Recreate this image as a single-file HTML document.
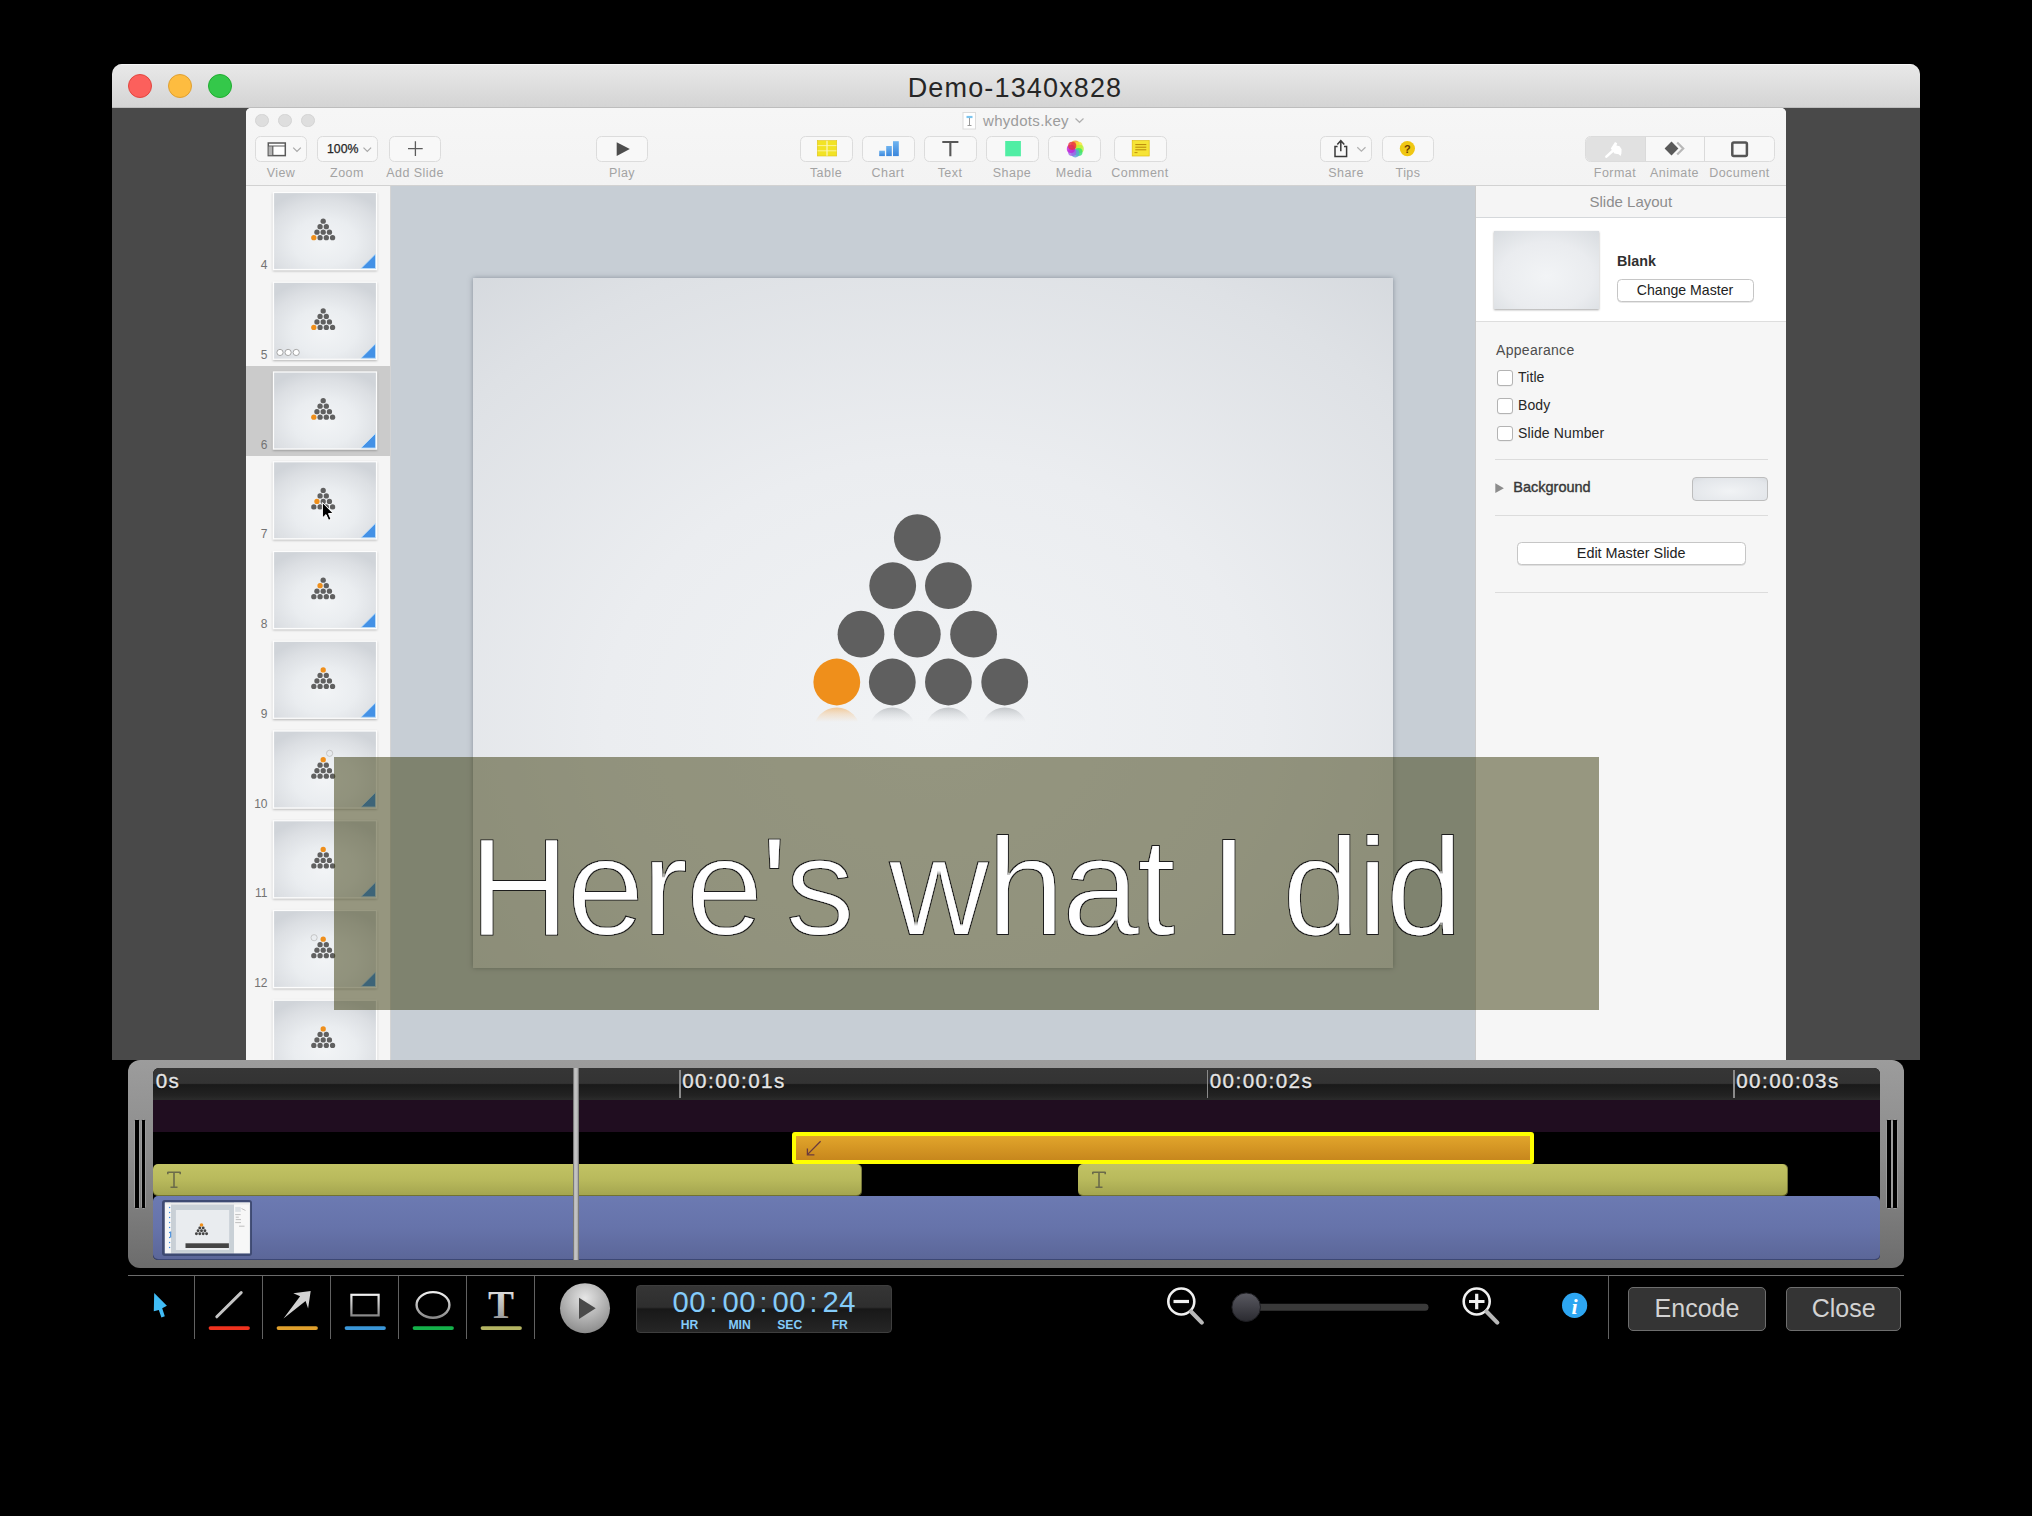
<!DOCTYPE html>
<html><head><meta charset="utf-8"><style>*{margin:0;padding:0;box-sizing:border-box}
html,body{width:2032px;height:1516px;overflow:hidden;background:#000;font-family:"Liberation Sans",sans-serif;position:relative}
div,svg{position:absolute}
.tl{width:24px;height:24px;border-radius:50%;top:74px}
.gl{width:13.6px;height:13.6px;border-radius:50%;background:#dedede;border:1px solid #d4d4d4;top:113.7px}
.btn{height:26px;top:136.4px;border:1px solid #dcdcdc;border-radius:5.5px;background:#f8f8f8}
.lbl{top:165.2px;height:16px;line-height:16px;font-size:12.5px;letter-spacing:0.45px;color:#a3a3a3;text-align:center;width:100px;white-space:nowrap}
.cb{left:1497px;width:15.6px;height:15.6px;border:1px solid #b3b3b3;border-radius:3px;background:#fff;box-shadow:0 0.5px 0.5px rgba(0,0,0,0.08)}
.sep{left:1494.5px;width:273.5px;height:1px;background:#dcdcdc}
.pbtn{background:#fff;border:1px solid #c6c6c6;border-radius:4.5px;box-shadow:0 0.8px 0.6px rgba(0,0,0,0.12)}
</style></head><body>
<div style="left:112px;top:64px;width:1808px;height:996px;background:#494949;border-radius:10px 10px 0 0;overflow:hidden"><div style="left:0;top:0;width:1808px;height:44px;background:linear-gradient(#e9e9e9,#d4d4d4);border-bottom:1px solid #bdbdbd;box-shadow:inset 0 1px 0 rgba(255,255,255,0.55)"></div></div><div class="tl" style="left:128px;background:#fc605c;border:1px solid #e2463f"></div><div class="tl" style="left:168px;background:#fdbc40;border:1px solid #dfa032"></div><div class="tl" style="left:208px;background:#34c84a;border:1px solid #20ad30"></div><div id="ttl" style="left:813px;top:72px;width:404px;height:32px;line-height:32px;text-align:center;font-size:27px;letter-spacing:1.15px;color:#262626">Demo-1340x828</div><div style="left:246px;top:108px;width:1540px;height:952px;background:#f5f5f5;border-radius:5px 5px 0 0;overflow:hidden"><div style="left:0;top:0;width:1540px;height:78px;background:linear-gradient(#f6f6f6,#f3f3f3);border-bottom:1px solid #d2d2d2"></div></div><div class="gl" style="left:255px"></div><div class="gl" style="left:278px"></div><div class="gl" style="left:301px"></div><div class="btn" style="left:255px;width:52px"></div><div class="btn" style="left:317px;width:61px"></div><div class="btn" style="left:389px;width:52px"></div><div class="btn" style="left:596px;width:52px"></div><div class="btn" style="left:800px;width:53px"></div><div class="btn" style="left:862px;width:53px"></div><div class="btn" style="left:924px;width:53px"></div><div class="btn" style="left:986px;width:53px"></div><div class="btn" style="left:1048px;width:53px"></div><div class="btn" style="left:1114px;width:53px"></div><div class="btn" style="left:1320px;width:52px"></div><div class="btn" style="left:1382px;width:52px"></div><div class="btn" style="left:1585px;width:190px;overflow:hidden"><div style="left:0;top:0;width:59px;height:24px;background:#e1e1e1"></div><div style="left:59px;top:0;width:1px;height:24px;background:#dadada"></div><div style="left:118px;top:0;width:1px;height:24px;background:#dadada"></div></div><div class="lbl" style="left:231px">View</div><div class="lbl" style="left:297px">Zoom</div><div class="lbl" style="left:365px">Add Slide</div><div class="lbl" style="left:572px">Play</div><div class="lbl" style="left:776px">Table</div><div class="lbl" style="left:838px">Chart</div><div class="lbl" style="left:900px">Text</div><div class="lbl" style="left:962px">Shape</div><div class="lbl" style="left:1024px">Media</div><div class="lbl" style="left:1090px">Comment</div><div class="lbl" style="left:1296px">Share</div><div class="lbl" style="left:1358px">Tips</div><div class="lbl" style="left:1565px">Format</div><div class="lbl" style="left:1624.5px">Animate</div><div class="lbl" style="left:1689.5px">Document</div><div style="left:983px;top:112px;height:18px;line-height:18px;font-size:15px;letter-spacing:0.3px;color:#9c9c9c;white-space:nowrap">whydots.key</div><div style="left:327px;top:141px;height:16px;line-height:16px;font-size:12.3px;color:#262626;white-space:nowrap;-webkit-text-stroke:0.25px #262626">100%</div><svg style="left:0;top:0" width="2032" height="200"><rect x="963" y="112.5" width="12.5" height="16.5" fill="#fff" stroke="#dcdcdc" stroke-width="1"/><path d="M966.5,117 h6" stroke="#7cc4ee" stroke-width="2.2"/><path d="M969.5,118 v7 M967.5,125.5 h4" stroke="#9a9a9a" stroke-width="1"/><path d="M1075.5,118.5 l4,3.8 l4,-3.8" fill="none" stroke="#b0b0b0" stroke-width="1.2"/><rect x="268.3" y="143" width="17" height="12.6" fill="#fff" stroke="#5a5a5a" stroke-width="1.5"/><rect x="268.6" y="146.2" width="4" height="9" fill="#b4b4b4"/><path d="M268.3,146 h17 M272.8,146 v9.6" stroke="#5a5a5a" stroke-width="1.2"/><path d="M293.2,147.6 l3.8,3.8 l3.8,-3.8" fill="none" stroke="#a8a8a8" stroke-width="1.2"/><path d="M363.5,147.6 l3.8,3.8 l3.8,-3.8" fill="none" stroke="#a8a8a8" stroke-width="1.2"/><path d="M415.4,141.3 v14.8 M408,148.7 h14.7" stroke="#5c5c5c" stroke-width="1.3"/><path d="M616.7,142.3 L629.8,149.1 L616.7,155.9 Z" fill="#4d4d4d"/><rect x="817.3" y="140.6" width="19.4" height="15.4" fill="#f2e324" stroke="#e0c41c" stroke-width="0.6"/><path d="M817.5,145.6 h19 M817.5,150.8 h19" stroke="#fbf39a" stroke-width="1"/><path d="M827,140.8 v15" stroke="#fbf6c0" stroke-width="1.2"/><defs><linearGradient id="bl" x1="0" y1="0" x2="0" y2="1"><stop offset="0" stop-color="#6fb4f0"/><stop offset="1" stop-color="#3a86dc"/></linearGradient></defs><rect x="879.2" y="150.7" width="5.7" height="5.4" fill="url(#bl)"/><rect x="886.2" y="146" width="5.6" height="10.1" fill="url(#bl)"/><rect x="893" y="141.2" width="5.8" height="14.9" fill="url(#bl)"/><path d="M942.3,142 h16.1 M950.35,142 v14.3" stroke="#585858" stroke-width="2.1"/><rect x="1005.2" y="141" width="15.7" height="15.3" fill="#50eea4"/><circle cx="1075.30" cy="144.50" r="4.1" fill="#f39a1e" fill-opacity="0.8"/><circle cx="1078.41" cy="145.79" r="4.1" fill="#f5e430" fill-opacity="0.8"/><circle cx="1079.70" cy="148.90" r="4.1" fill="#b5f238" fill-opacity="0.8"/><circle cx="1078.41" cy="152.01" r="4.1" fill="#30e070" fill-opacity="0.8"/><circle cx="1075.30" cy="153.30" r="4.1" fill="#5aa0d8" fill-opacity="0.8"/><circle cx="1072.19" cy="152.01" r="4.1" fill="#a060e8" fill-opacity="0.8"/><circle cx="1070.90" cy="148.90" r="4.1" fill="#c020d8" fill-opacity="0.8"/><circle cx="1072.19" cy="145.79" r="4.1" fill="#e8303c" fill-opacity="0.8"/><rect x="1132.2" y="140.6" width="17" height="15.4" fill="#f6e436" stroke="#e0be10" stroke-width="0.7"/><path d="M1135.3,144.6 h11 M1135.3,147.2 h11 M1135.3,149.8 h11" stroke="#b8860b" stroke-width="1"/><path d="M1134.5,152.6 h3" stroke="#b8860b" stroke-width="0.9"/><path d="M1337.6,146.6 H1335 V156.6 H1346.6 V146.6 H1344" fill="none" stroke="#3a3a3a" stroke-width="1.5"/><path d="M1340.8,151.3 V141 M1337.3,144.4 L1340.8,140.7 L1344.3,144.4" fill="none" stroke="#3a3a3a" stroke-width="1.5"/><path d="M1357.3,147.2 l4.1,3.9 l4.1,-3.9" fill="none" stroke="#b0b0b0" stroke-width="1.2"/><circle cx="1407.4" cy="148.6" r="7.6" fill="#f0c713"/><text x="1407.4" y="152.6" font-size="11" font-weight="bold" text-anchor="middle" fill="#6b3d00" font-family="Liberation Sans">?</text><path d="M1610.8,148.6 L1615,142 L1617.2,143.2 L1616.4,145.6 L1619.6,146.2 L1621.6,149.2 L1621.4,153.6 L1620.6,156 L1618.6,154.2 L1614.4,153.4 Z" fill="#fff"/><path d="M1612.6,151 L1606.4,156.6" stroke="#fff" stroke-width="2.6" stroke-linecap="round"/><path d="M1664.6,148.5 L1671.5,141.5 L1678.4,148.5 L1671.5,155.6 Z" fill="#595959"/><path d="M1677.2,142.5 L1683.2,148.5 L1677.2,154.5" fill="none" stroke="#b8b8b8" stroke-width="2.2"/><rect x="1732.3" y="142.6" width="14.6" height="13.4" rx="1.5" fill="none" stroke="#555" stroke-width="2.5"/></svg>
<div style="left:246px;top:186px;width:145px;height:874px;background:#f5f5f5;border-right:1px solid #d4d4d4"></div><div style="left:246px;top:366px;width:144px;height:90px;background:#cbcbcb"></div><div style="top:258.04px;height:14.4px;line-height:14.4px;font-size:12px;color:#737373;white-space:nowrap;left:227.50px;width:40px;text-align:right;">4</div><div style="top:347.79px;height:14.4px;line-height:14.4px;font-size:12px;color:#737373;white-space:nowrap;left:227.50px;width:40px;text-align:right;">5</div><div style="top:437.54px;height:14.4px;line-height:14.4px;font-size:12px;color:#737373;white-space:nowrap;left:227.50px;width:40px;text-align:right;">6</div><div style="top:527.29px;height:14.4px;line-height:14.4px;font-size:12px;color:#737373;white-space:nowrap;left:227.50px;width:40px;text-align:right;">7</div><div style="top:617.04px;height:14.4px;line-height:14.4px;font-size:12px;color:#737373;white-space:nowrap;left:227.50px;width:40px;text-align:right;">8</div><div style="top:706.79px;height:14.4px;line-height:14.4px;font-size:12px;color:#737373;white-space:nowrap;left:227.50px;width:40px;text-align:right;">9</div><div style="top:796.54px;height:14.4px;line-height:14.4px;font-size:12px;color:#737373;white-space:nowrap;left:227.50px;width:40px;text-align:right;">10</div><div style="top:886.29px;height:14.4px;line-height:14.4px;font-size:12px;color:#737373;white-space:nowrap;left:227.50px;width:40px;text-align:right;">11</div><div style="top:976.04px;height:14.4px;line-height:14.4px;font-size:12px;color:#737373;white-space:nowrap;left:227.50px;width:40px;text-align:right;">12</div><svg style="left:0;top:0" width="400" height="1060"><defs><radialGradient id="tg" cx="50%" cy="64%" r="68%"><stop offset="0" stop-color="#f2f4f6"/><stop offset="0.45" stop-color="#eaedf0"/><stop offset="0.8" stop-color="#dcdfe3"/><stop offset="1" stop-color="#d0d4d9"/></radialGradient><filter id="sh" x="-10%" y="-10%" width="120%" height="130%"><feDropShadow dx="0" dy="1" stdDeviation="1.2" flood-color="#000" flood-opacity="0.28"/></filter></defs><rect x="273.5" y="192.5" width="103" height="77" fill="url(#tg)" stroke="#fdfdfd" stroke-width="1.2" filter="url(#sh)"/><circle cx="323.20" cy="221.20" r="2.65" fill="#606060"/><circle cx="320.07" cy="226.70" r="2.65" fill="#606060"/><circle cx="326.32" cy="226.70" r="2.65" fill="#606060"/><circle cx="316.95" cy="232.20" r="2.65" fill="#606060"/><circle cx="323.20" cy="232.20" r="2.65" fill="#606060"/><circle cx="329.45" cy="232.20" r="2.65" fill="#606060"/><circle cx="313.82" cy="237.70" r="2.65" fill="#ef8f1b"/><circle cx="320.07" cy="237.70" r="2.65" fill="#606060"/><circle cx="326.32" cy="237.70" r="2.65" fill="#606060"/><circle cx="332.57" cy="237.70" r="2.65" fill="#606060"/><path d="M375.5,254.0 L375.5,268.5 L361,268.5 Z" fill="#4391e6" stroke="#bfe0fa" stroke-width="0.8"/><rect x="273.5" y="282.25" width="103" height="77" fill="url(#tg)" stroke="#fdfdfd" stroke-width="1.2" filter="url(#sh)"/><circle cx="323.20" cy="310.95" r="2.65" fill="#606060"/><circle cx="320.07" cy="316.45" r="2.65" fill="#606060"/><circle cx="326.32" cy="316.45" r="2.65" fill="#606060"/><circle cx="316.95" cy="321.95" r="2.65" fill="#606060"/><circle cx="323.20" cy="321.95" r="2.65" fill="#606060"/><circle cx="329.45" cy="321.95" r="2.65" fill="#606060"/><circle cx="313.82" cy="327.45" r="2.65" fill="#ef8f1b"/><circle cx="320.07" cy="327.45" r="2.65" fill="#606060"/><circle cx="326.32" cy="327.45" r="2.65" fill="#606060"/><circle cx="332.57" cy="327.45" r="2.65" fill="#606060"/><path d="M375.5,343.75 L375.5,358.25 L361,358.25 Z" fill="#4391e6" stroke="#bfe0fa" stroke-width="0.8"/><circle cx="280.0" cy="352.45" r="3.1" fill="#fff" stroke="#9c9c9c" stroke-width="0.9"/><circle cx="288.1" cy="352.45" r="3.1" fill="#fff" stroke="#9c9c9c" stroke-width="0.9"/><circle cx="296.2" cy="352.45" r="3.1" fill="#fff" stroke="#9c9c9c" stroke-width="0.9"/><rect x="273.5" y="372.0" width="103" height="77" fill="url(#tg)" stroke="#fdfdfd" stroke-width="1.2" filter="url(#sh)"/><circle cx="323.20" cy="400.70" r="2.65" fill="#606060"/><circle cx="320.07" cy="406.20" r="2.65" fill="#606060"/><circle cx="326.32" cy="406.20" r="2.65" fill="#606060"/><circle cx="316.95" cy="411.70" r="2.65" fill="#606060"/><circle cx="323.20" cy="411.70" r="2.65" fill="#606060"/><circle cx="329.45" cy="411.70" r="2.65" fill="#606060"/><circle cx="313.82" cy="417.20" r="2.65" fill="#ef8f1b"/><circle cx="320.07" cy="417.20" r="2.65" fill="#606060"/><circle cx="326.32" cy="417.20" r="2.65" fill="#606060"/><circle cx="332.57" cy="417.20" r="2.65" fill="#606060"/><path d="M375.5,433.5 L375.5,448.0 L361,448.0 Z" fill="#4391e6" stroke="#bfe0fa" stroke-width="0.8"/><rect x="273.5" y="461.75" width="103" height="77" fill="url(#tg)" stroke="#fdfdfd" stroke-width="1.2" filter="url(#sh)"/><circle cx="323.20" cy="490.45" r="2.65" fill="#606060"/><circle cx="320.07" cy="495.95" r="2.65" fill="#606060"/><circle cx="326.32" cy="495.95" r="2.65" fill="#606060"/><circle cx="316.95" cy="501.45" r="2.65" fill="#ef8f1b"/><circle cx="323.20" cy="501.45" r="2.65" fill="#606060"/><circle cx="329.45" cy="501.45" r="2.65" fill="#606060"/><circle cx="313.82" cy="506.95" r="2.65" fill="#606060"/><circle cx="320.07" cy="506.95" r="2.65" fill="#606060"/><circle cx="326.32" cy="506.95" r="2.65" fill="#606060"/><circle cx="332.57" cy="506.95" r="2.65" fill="#606060"/><path d="M375.5,523.25 L375.5,537.75 L361,537.75 Z" fill="#4391e6" stroke="#bfe0fa" stroke-width="0.8"/><rect x="273.5" y="551.5" width="103" height="77" fill="url(#tg)" stroke="#fdfdfd" stroke-width="1.2" filter="url(#sh)"/><circle cx="323.20" cy="580.20" r="2.65" fill="#606060"/><circle cx="320.07" cy="585.70" r="2.65" fill="#ef8f1b"/><circle cx="326.32" cy="585.70" r="2.65" fill="#606060"/><circle cx="316.95" cy="591.20" r="2.65" fill="#606060"/><circle cx="323.20" cy="591.20" r="2.65" fill="#606060"/><circle cx="329.45" cy="591.20" r="2.65" fill="#606060"/><circle cx="313.82" cy="596.70" r="2.65" fill="#606060"/><circle cx="320.07" cy="596.70" r="2.65" fill="#606060"/><circle cx="326.32" cy="596.70" r="2.65" fill="#606060"/><circle cx="332.57" cy="596.70" r="2.65" fill="#606060"/><path d="M375.5,613.0 L375.5,627.5 L361,627.5 Z" fill="#4391e6" stroke="#bfe0fa" stroke-width="0.8"/><rect x="273.5" y="641.25" width="103" height="77" fill="url(#tg)" stroke="#fdfdfd" stroke-width="1.2" filter="url(#sh)"/><circle cx="323.20" cy="669.95" r="2.65" fill="#ef8f1b"/><circle cx="320.07" cy="675.45" r="2.65" fill="#606060"/><circle cx="326.32" cy="675.45" r="2.65" fill="#606060"/><circle cx="316.95" cy="680.95" r="2.65" fill="#606060"/><circle cx="323.20" cy="680.95" r="2.65" fill="#606060"/><circle cx="329.45" cy="680.95" r="2.65" fill="#606060"/><circle cx="313.82" cy="686.45" r="2.65" fill="#606060"/><circle cx="320.07" cy="686.45" r="2.65" fill="#606060"/><circle cx="326.32" cy="686.45" r="2.65" fill="#606060"/><circle cx="332.57" cy="686.45" r="2.65" fill="#606060"/><path d="M375.5,702.75 L375.5,717.25 L361,717.25 Z" fill="#4391e6" stroke="#bfe0fa" stroke-width="0.8"/><rect x="273.5" y="731.0" width="103" height="77" fill="url(#tg)" stroke="#fdfdfd" stroke-width="1.2" filter="url(#sh)"/><circle cx="323.20" cy="759.70" r="2.65" fill="#ef8f1b"/><circle cx="320.07" cy="765.20" r="2.65" fill="#606060"/><circle cx="326.32" cy="765.20" r="2.65" fill="#606060"/><circle cx="316.95" cy="770.70" r="2.65" fill="#606060"/><circle cx="323.20" cy="770.70" r="2.65" fill="#606060"/><circle cx="329.45" cy="770.70" r="2.65" fill="#606060"/><circle cx="313.82" cy="776.20" r="2.65" fill="#606060"/><circle cx="320.07" cy="776.20" r="2.65" fill="#606060"/><circle cx="326.32" cy="776.20" r="2.65" fill="#606060"/><circle cx="332.57" cy="776.20" r="2.65" fill="#606060"/><path d="M375.5,792.5 L375.5,807.0 L361,807.0 Z" fill="#4391e6" stroke="#bfe0fa" stroke-width="0.8"/><circle cx="329.6" cy="753.3" r="3.1" fill="none" stroke="#bcbcbc" stroke-width="0.8"/><rect x="273.5" y="820.75" width="103" height="77" fill="url(#tg)" stroke="#fdfdfd" stroke-width="1.2" filter="url(#sh)"/><circle cx="323.20" cy="849.45" r="2.65" fill="#ef8f1b"/><circle cx="320.07" cy="854.95" r="2.65" fill="#606060"/><circle cx="326.32" cy="854.95" r="2.65" fill="#606060"/><circle cx="316.95" cy="860.45" r="2.65" fill="#606060"/><circle cx="323.20" cy="860.45" r="2.65" fill="#606060"/><circle cx="329.45" cy="860.45" r="2.65" fill="#606060"/><circle cx="313.82" cy="865.95" r="2.65" fill="#606060"/><circle cx="320.07" cy="865.95" r="2.65" fill="#606060"/><circle cx="326.32" cy="865.95" r="2.65" fill="#606060"/><circle cx="332.57" cy="865.95" r="2.65" fill="#606060"/><path d="M375.5,882.25 L375.5,896.75 L361,896.75 Z" fill="#4391e6" stroke="#bfe0fa" stroke-width="0.8"/><rect x="273.5" y="910.5" width="103" height="77" fill="url(#tg)" stroke="#fdfdfd" stroke-width="1.2" filter="url(#sh)"/><circle cx="323.20" cy="939.20" r="2.65" fill="#ef8f1b"/><circle cx="320.07" cy="944.70" r="2.65" fill="#606060"/><circle cx="326.32" cy="944.70" r="2.65" fill="#606060"/><circle cx="316.95" cy="950.20" r="2.65" fill="#606060"/><circle cx="323.20" cy="950.20" r="2.65" fill="#606060"/><circle cx="329.45" cy="950.20" r="2.65" fill="#606060"/><circle cx="313.82" cy="955.70" r="2.65" fill="#606060"/><circle cx="320.07" cy="955.70" r="2.65" fill="#606060"/><circle cx="326.32" cy="955.70" r="2.65" fill="#606060"/><circle cx="332.57" cy="955.70" r="2.65" fill="#606060"/><path d="M375.5,972.0 L375.5,986.5 L361,986.5 Z" fill="#4391e6" stroke="#bfe0fa" stroke-width="0.8"/><circle cx="314.1" cy="937.7" r="3.1" fill="none" stroke="#bcbcbc" stroke-width="0.8"/><rect x="273.5" y="1000.25" width="103" height="77" fill="url(#tg)" stroke="#fdfdfd" stroke-width="1.2" filter="url(#sh)"/><circle cx="323.20" cy="1028.95" r="2.65" fill="#ef8f1b"/><circle cx="320.07" cy="1034.45" r="2.65" fill="#606060"/><circle cx="326.32" cy="1034.45" r="2.65" fill="#606060"/><circle cx="316.95" cy="1039.95" r="2.65" fill="#606060"/><circle cx="323.20" cy="1039.95" r="2.65" fill="#606060"/><circle cx="329.45" cy="1039.95" r="2.65" fill="#606060"/><circle cx="313.82" cy="1045.45" r="2.65" fill="#606060"/><circle cx="320.07" cy="1045.45" r="2.65" fill="#606060"/><circle cx="326.32" cy="1045.45" r="2.65" fill="#606060"/><circle cx="332.57" cy="1045.45" r="2.65" fill="#606060"/><path d="M322.4,502.5 L322.4,518 L326,514.6 L328.6,520.3 L331,519.2 L328.5,513.6 L333.2,513.4 Z" fill="#000" stroke="#fff" stroke-width="1"/></svg><div style="left:391px;top:186px;width:1084px;height:874px;background:#c7ced5"></div><div style="left:473px;top:278px;width:920px;height:690px;background:radial-gradient(ellipse 85% 90% at 50% 64%,#f1f3f5 0%,#ebedf0 42%,#dee1e5 78%,#d2d6db 100%);box-shadow:0 0 5px rgba(70,80,95,0.5)"></div><svg style="left:780px;top:490px" width="280" height="250" viewBox="780 490 280 250"><defs><linearGradient id="rf" gradientUnits="userSpaceOnUse" x1="0" y1="706" x2="0" y2="722"><stop offset="0" stop-color="#8e9398" stop-opacity="0.55"/><stop offset="0.5" stop-color="#b0b4b8" stop-opacity="0.3"/><stop offset="1" stop-color="#c8ccd0" stop-opacity="0"/></linearGradient><linearGradient id="rfo" gradientUnits="userSpaceOnUse" x1="0" y1="706" x2="0" y2="722"><stop offset="0" stop-color="#f0a040" stop-opacity="0.6"/><stop offset="0.5" stop-color="#f5b870" stop-opacity="0.3"/><stop offset="1" stop-color="#f5c080" stop-opacity="0"/></linearGradient></defs><circle cx="917.3" cy="537.7" r="23.4" fill="#5f5f5f"/><circle cx="892.7" cy="585.7" r="23.4" fill="#5f5f5f"/><circle cx="948.4" cy="585.7" r="23.4" fill="#5f5f5f"/><circle cx="861" cy="634.2" r="23.4" fill="#5f5f5f"/><circle cx="917.3" cy="634.2" r="23.4" fill="#5f5f5f"/><circle cx="973.6" cy="634.2" r="23.4" fill="#5f5f5f"/><circle cx="836.8" cy="682" r="23.4" fill="#ef8f1b"/><circle cx="892.3" cy="682" r="23.4" fill="#5f5f5f"/><circle cx="948.4" cy="682" r="23.4" fill="#5f5f5f"/><circle cx="1004.7" cy="682" r="23.4" fill="#5f5f5f"/><clipPath id="rc"><rect x="780" y="706.2" width="280" height="16"/></clipPath><circle cx="836.8" cy="730.6" r="23.2" fill="url(#rfo)" clip-path="url(#rc)"/><circle cx="892.3" cy="730.6" r="23.2" fill="url(#rf)" clip-path="url(#rc)"/><circle cx="948.4" cy="730.6" r="23.2" fill="url(#rf)" clip-path="url(#rc)"/><circle cx="1004.7" cy="730.6" r="23.2" fill="url(#rf)" clip-path="url(#rc)"/></svg><div style="left:1475px;top:186px;width:311px;height:874px;background:#f6f6f6;border-left:1px solid #cacaca"></div><div style="left:1476px;top:186px;width:310px;height:32px;background:#f5f5f5;border-bottom:1px solid #d5d8db"></div><div style="left:1476px;top:218px;width:310px;height:104px;background:#fff;border-bottom:1px solid #dedede"></div><div style="top:193.30px;height:18.0px;line-height:18.0px;font-size:15px;color:#8d8d8d;white-space:nowrap;left:1530.80px;width:200px;text-align:center;">Slide Layout</div><div style="left:1493.5px;top:231px;width:105px;height:78px;background:radial-gradient(ellipse 80% 80% at 50% 58%,#f2f4f6 0%,#eaecef 55%,#d6dade 100%);box-shadow:0 1px 2px rgba(0,0,0,0.35)"></div><div style="top:252.67px;height:17.16px;line-height:17.16px;font-size:14.3px;color:#303030;white-space:nowrap;font-weight:bold;left:1617.00px;">Blank</div><div class="pbtn" style="left:1616.5px;top:278.7px;width:137px;height:23px"></div><div style="top:281.95px;height:16.92px;line-height:16.92px;font-size:14.1px;color:#222;white-space:nowrap;left:1605.00px;width:160px;text-align:center;">Change Master</div><div style="top:342.15px;height:16.8px;line-height:16.8px;font-size:14px;color:#4d4d4d;white-space:nowrap;letter-spacing:0.3px;left:1496.00px;">Appearance</div><div class="cb" style="top:370.2px"></div><div style="top:369.35px;height:16.8px;line-height:16.8px;font-size:14px;color:#262626;white-space:nowrap;letter-spacing:0.12px;left:1518.00px;">Title</div><div class="cb" style="top:398.0px"></div><div style="top:397.15px;height:16.8px;line-height:16.8px;font-size:14px;color:#262626;white-space:nowrap;letter-spacing:0.12px;left:1518.00px;">Body</div><div class="cb" style="top:425.8px"></div><div style="top:424.95px;height:16.8px;line-height:16.8px;font-size:14px;color:#262626;white-space:nowrap;letter-spacing:0.12px;left:1518.00px;">Slide Number</div><div class="sep" style="top:459px"></div><svg style="left:1494px;top:482px" width="12" height="14"><path d="M1.3,1.2 L9.9,6.2 L1.3,11.1 Z" fill="#8c8c8c"/></svg><div style="top:479.38px;height:17.4px;line-height:17.4px;font-size:14.5px;color:#383838;white-space:nowrap;left:1513.30px;-webkit-text-stroke:0.4px #383838;">Background</div><div style="left:1692px;top:477.3px;width:75.7px;height:23.3px;border:1px solid #bdbdbd;border-radius:4px;background:radial-gradient(ellipse 80% 90% at 50% 60%,#f1f3f5 0%,#e3e6ea 70%,#d3d7dc 100%)"></div><div class="sep" style="top:515px"></div><div class="pbtn" style="left:1516.7px;top:541.8px;width:229px;height:23.4px"></div><div style="top:545.37px;height:17.28px;line-height:17.28px;font-size:14.4px;color:#222;white-space:nowrap;left:1511.20px;width:240px;text-align:center;">Edit Master Slide</div><div class="sep" style="top:592px"></div>
<div style="left:334px;top:757px;width:1264.5px;height:253px;background:rgba(56,56,10,0.5)"></div><svg style="left:0;top:700px" width="2032" height="330" viewBox="0 700 2032 330"><defs><filter id="thin" filterUnits="userSpaceOnUse" x="400" y="780" width="1150" height="200"><feMorphology in="SourceAlpha" operator="erode" radius="1" result="w"/><feFlood flood-color="#1e1e1e" result="dk"/><feComposite in="dk" in2="SourceAlpha" operator="in" result="ol"/><feFlood flood-color="#ffffff" result="wh"/><feComposite in="wh" in2="w" operator="in" result="wf"/><feMerge><feMergeNode in="ol"/><feMergeNode in="wf"/></feMerge></filter></defs><text id="big" x="469" y="934.6" font-family="Liberation Sans" font-size="139" fill="#fff" letter-spacing="-2.3" filter="url(#thin)">Here's what I did</text></svg>
<div style="left:128px;top:1060px;width:1776px;height:208px;border-radius:12px;background:linear-gradient(#9c9c9c 0%,#8c8c8c 45%,#6c6c6c 100%)"></div><div style="left:152.5px;top:1068px;width:1727.5px;height:192px;background:#000;border-radius:6px 6px 5px 5px"></div><div style="left:152.5px;top:1068px;width:1727.5px;height:32px;border-radius:6px 6px 0 0;background:linear-gradient(#363636 0%,#333 48%,#191919 52%,#222 85%,#2b2b2b 100%)"></div><div style="left:152.5px;top:1100px;width:1727.5px;height:32px;background:#200d20"></div><div style="left:155.7px;top:1068.5px;height:24px;line-height:24px;font-size:20.6px;letter-spacing:1.45px;color:#e4e4e4;white-space:nowrap;-webkit-text-stroke:0.35px #e4e4e4;text-shadow:0 1px 1px rgba(0,0,0,0.8)">0s</div><div style="left:679.25px;top:1070px;width:1.5px;height:28px;background:#8a8a8a"></div><div style="left:682.2px;top:1068.5px;height:24px;line-height:24px;font-size:20.6px;letter-spacing:1.45px;color:#e4e4e4;white-space:nowrap;-webkit-text-stroke:0.35px #e4e4e4;text-shadow:0 1px 1px rgba(0,0,0,0.8)">00:00:01s</div><div style="left:1206.75px;top:1070px;width:1.5px;height:28px;background:#8a8a8a"></div><div style="left:1209.7px;top:1068.5px;height:24px;line-height:24px;font-size:20.6px;letter-spacing:1.45px;color:#e4e4e4;white-space:nowrap;-webkit-text-stroke:0.35px #e4e4e4;text-shadow:0 1px 1px rgba(0,0,0,0.8)">00:00:02s</div><div style="left:1733.25px;top:1070px;width:1.5px;height:28px;background:#8a8a8a"></div><div style="left:1736.2px;top:1068.5px;height:24px;line-height:24px;font-size:20.6px;letter-spacing:1.45px;color:#e4e4e4;white-space:nowrap;-webkit-text-stroke:0.35px #e4e4e4;text-shadow:0 1px 1px rgba(0,0,0,0.8)">00:00:03s</div><div style="left:792px;top:1132px;width:742px;height:31.8px;border:4px solid #ffff00;border-radius:3px;background:linear-gradient(#e2a52b,#c7871d)"></div><svg style="left:800px;top:1136px" width="28" height="24" viewBox="800 1136 28 24"><path d="M820.6,1141.3 L807.4,1154.6 M807.4,1148.6 L807.4,1154.8 L814.4,1154.8" fill="none" stroke="#6a3a3e" stroke-width="1.3"/></svg><div style="left:152.5px;top:1164px;width:709.1px;height:31.8px;border-radius:5px;background:linear-gradient(#c2c364 0%,#b8b95c 50%,#a3a44e 100%);box-shadow:inset -1px 0 0 rgba(0,0,0,0.35), inset 0 -1px 0 rgba(80,80,30,0.6)"></div><svg style="left:165.5px;top:1170px" width="18" height="20"><path d="M1.5,2.3 H14.5 M8,2.3 V17.3 M4.5,17.3 H11.5 M1.8,2 V4.2 M14.2,2 V4.2" fill="none" stroke="#6b6b4a" stroke-width="1.6"/></svg><div style="left:1078px;top:1164px;width:709.7px;height:31.8px;border-radius:5px;background:linear-gradient(#c2c364 0%,#b8b95c 50%,#a3a44e 100%);box-shadow:inset -1px 0 0 rgba(0,0,0,0.35), inset 0 -1px 0 rgba(80,80,30,0.6)"></div><svg style="left:1091px;top:1170px" width="18" height="20"><path d="M1.5,2.3 H14.5 M8,2.3 V17.3 M4.5,17.3 H11.5 M1.8,2 V4.2 M14.2,2 V4.2" fill="none" stroke="#6b6b4a" stroke-width="1.6"/></svg><div style="left:152.5px;top:1196.3px;width:1727px;height:63.3px;border-radius:5px;background:linear-gradient(#6c7ab2 0%,#6673aa 50%,#5b6698 100%);box-shadow:inset 0 -1px 0 rgba(30,40,80,0.5)"></div><div style="left:162.2px;top:1200.2px;width:89.4px;height:55.5px;background:#3e4a72;border-radius:3px"></div><svg style="left:160px;top:1198px" width="95" height="62" viewBox="160 1198 95 62"><rect x="165" y="1202.8" width="84.8" height="50.3" fill="#c9d0d6"/><rect x="165" y="1202.8" width="6" height="50.3" fill="#f6f6f6"/><rect x="234" y="1202.8" width="15.8" height="50.3" fill="#f7f7f7"/><rect x="165" y="1202.8" width="84.8" height="1.8" fill="#ececec"/><rect x="175.9" y="1210" width="53.3" height="40" fill="#e9ecef"/><rect x="185.5" y="1243.3" width="43.4" height="4.7" fill="#444"/><rect x="235.2" y="1206.9" width="5.6" height="5" fill="#dde1e5"/><path d="M241.5,1208.5 l4,2 M235.2,1214.6 h5.5 M235.8,1217.2 h3 M235.8,1219.6 h5.2 M235.2,1222.6 h5.8 M239,1226.2 h5.5" stroke="#9a9a9a" stroke-width="0.6"/><rect x="165" y="1202.8" width="84.8" height="50.3" fill="none" stroke="#eef0f2" stroke-width="0.5"/><circle cx="169.6" cy="1207.5" r="0.7" fill="#3f8de6"/><circle cx="169.6" cy="1212.5" r="0.7" fill="#3f8de6"/><circle cx="169.6" cy="1217.5" r="0.7" fill="#3f8de6"/><circle cx="169.6" cy="1222.5" r="0.7" fill="#3f8de6"/><circle cx="169.6" cy="1227.5" r="0.7" fill="#3f8de6"/><circle cx="169.6" cy="1232.5" r="0.7" fill="#3f8de6"/><circle cx="169.6" cy="1237.5" r="0.7" fill="#3f8de6"/><circle cx="169.6" cy="1242.5" r="0.7" fill="#3f8de6"/><circle cx="169.6" cy="1247.5" r="0.7" fill="#3f8de6"/><rect x="170.2" y="1231.5" width="1" height="6" fill="#2e7fd8"/><circle cx="201.5" cy="1225" r="1.8" fill="#ef8f1b"/><circle cx="199.80" cy="1227.90" r="1.45" fill="#444"/><circle cx="203.20" cy="1227.90" r="1.45" fill="#444"/><circle cx="198.10" cy="1230.80" r="1.45" fill="#444"/><circle cx="201.50" cy="1230.80" r="1.45" fill="#444"/><circle cx="204.90" cy="1230.80" r="1.45" fill="#444"/><circle cx="196.40" cy="1233.70" r="1.45" fill="#444"/><circle cx="199.80" cy="1233.70" r="1.45" fill="#444"/><circle cx="203.20" cy="1233.70" r="1.45" fill="#444"/><circle cx="206.60" cy="1233.70" r="1.45" fill="#444"/></svg><div style="left:573px;top:1068px;width:6px;height:192px;background:linear-gradient(90deg,#5a5a5a 0%,#b9b9b9 25%,#c8c8c8 50%,#a9a9a9 80%,#5a5a5a 100%)"></div><div style="left:134.3px;top:1119.4px;width:5.6px;height:89.4px;background:#000;border:1.4px solid #9c9c9c;border-radius:1.5px"></div><div style="left:140.5px;top:1119.4px;width:5.6px;height:89.4px;background:#000;border:1.4px solid #9c9c9c;border-radius:1.5px"></div><div style="left:1886px;top:1119.4px;width:5.6px;height:89.4px;background:#000;border:1.4px solid #9c9c9c;border-radius:1.5px"></div><div style="left:1892.2px;top:1119.4px;width:5.6px;height:89.4px;background:#000;border:1.4px solid #9c9c9c;border-radius:1.5px"></div><div style="left:128px;top:1274.6px;width:1776px;height:1.4px;background:#6b6b6b"></div><div style="left:193.9px;top:1275.5px;width:1.4px;height:63.2px;background:#626262"></div><div style="left:261.90000000000003px;top:1275.5px;width:1.4px;height:63.2px;background:#626262"></div><div style="left:329.90000000000003px;top:1275.5px;width:1.4px;height:63.2px;background:#626262"></div><div style="left:397.90000000000003px;top:1275.5px;width:1.4px;height:63.2px;background:#626262"></div><div style="left:465.90000000000003px;top:1275.5px;width:1.4px;height:63.2px;background:#626262"></div><div style="left:533.9px;top:1275.5px;width:1.4px;height:63.2px;background:#626262"></div><div style="left:1607.7px;top:1275.5px;width:1.4px;height:63.2px;background:#626262"></div><svg style="left:0;top:1270px" width="2032" height="80" viewBox="0 1270 2032 80"><defs><linearGradient id="mg" x1="0" y1="0" x2="0" y2="1"><stop offset="0" stop-color="#f0f0f0"/><stop offset="1" stop-color="#8a8a8a"/></linearGradient><linearGradient id="mg2" x1="0" y1="0" x2="1" y2="1"><stop offset="0" stop-color="#eeeeee"/><stop offset="1" stop-color="#9a9a9a"/></linearGradient><radialGradient id="pb" cx="50%" cy="30%" r="70%"><stop offset="0" stop-color="#e6e6e6"/><stop offset="1" stop-color="#8c8c8c"/></radialGradient><linearGradient id="kn" x1="0" y1="0" x2="0" y2="1"><stop offset="0" stop-color="#5a5a62"/><stop offset="1" stop-color="#2a2a30"/></linearGradient></defs><path d="M154.2,1292.9 L153.8,1311.3 L158.8,1310 L161.4,1317.4 L164.8,1316.2 L162.2,1308.3 L166.9,1305.7 Z" fill="#40bcf6"/><path d="M216.8,1316.8 L241.2,1292.6" stroke="url(#mg2)" stroke-width="3" stroke-linecap="round"/><path d="M210.5,1328.1 H248" stroke="#f0321e" stroke-width="3.8" stroke-linecap="round"/><path d="M283.5,1318.6 L300.1,1296.3 L293.3,1293.3 L310.7,1291.1 L308.1,1308.6 L305.6,1301 Z" fill="#d2d2d2"/><path d="M278.5,1328.1 H316" stroke="#e0a02c" stroke-width="3.8" stroke-linecap="round"/><rect x="351.4" y="1294.8" width="27.2" height="20.6" fill="none" stroke="url(#mg)" stroke-width="2.2"/><path d="M346.5,1328.1 H384" stroke="#3a96d8" stroke-width="3.8" stroke-linecap="round"/><ellipse cx="433" cy="1304.9" rx="16.4" ry="12.8" fill="none" stroke="url(#mg)" stroke-width="2.4"/><path d="M414.5,1328.1 H452" stroke="#14b14a" stroke-width="3.8" stroke-linecap="round"/><text x="501" y="1318" font-family="Liberation Serif" font-weight="bold" font-size="39" text-anchor="middle" fill="url(#mg)">T</text><path d="M482.5,1328.1 H520" stroke="#b4b462" stroke-width="3.8" stroke-linecap="round"/><circle cx="585" cy="1308.2" r="25" fill="url(#pb)"/><path d="M579,1297.7 L595.7,1308.3 L579,1319 Z" fill="#4a4a4a"/><circle cx="1181.3" cy="1301.5" r="13" fill="none" stroke="#f0f0f0" stroke-width="2.6"/><path d="M1173.5,1301.5 H1189" stroke="#f0f0f0" stroke-width="3.2"/><path d="M1191,1311.5 L1201.8,1322.6" stroke="#b8b8b8" stroke-width="4.2" stroke-linecap="round"/><path d="M1236,1307.2 H1425" stroke="#3a3a3a" stroke-width="7" stroke-linecap="round"/><circle cx="1246.2" cy="1307.2" r="14.3" fill="url(#kn)" stroke="#1e1e22" stroke-width="1"/><circle cx="1476.7" cy="1301.5" r="13" fill="none" stroke="#f0f0f0" stroke-width="2.6"/><path d="M1469,1301.5 H1484.5 M1476.7,1293.8 V1309.2" stroke="#f0f0f0" stroke-width="3.2"/><path d="M1486.5,1311.5 L1497.3,1322.6" stroke="#b8b8b8" stroke-width="4.2" stroke-linecap="round"/><circle cx="1574.6" cy="1305.4" r="12.6" fill="#2da6f2"/><text x="1574.6" y="1314.2" font-family="Liberation Serif" font-style="italic" font-weight="bold" font-size="22" text-anchor="middle" fill="#fff">i</text></svg><div style="left:636px;top:1285px;width:256.2px;height:48.2px;border-radius:4px;border:1px solid #3e3e3e;background:linear-gradient(#353535 0%,#2e2e2e 46%,#181818 50%,#1f1f1f 75%,#262626 100%)"></div><div style="left:672.6px;top:1285.2px;height:34px;line-height:34px;font-size:29.2px;color:#84ccfa;white-space:nowrap;letter-spacing:0.4px">00</div><div style="left:703.4px;top:1285px;width:20px;text-align:center;height:34px;line-height:34px;font-size:28.4px;color:#84ccfa">:</div><div style="left:722.6px;top:1285.2px;height:34px;line-height:34px;font-size:29.2px;color:#84ccfa;white-space:nowrap;letter-spacing:0.4px">00</div><div style="left:753.4px;top:1285px;width:20px;text-align:center;height:34px;line-height:34px;font-size:28.4px;color:#84ccfa">:</div><div style="left:772.6px;top:1285.2px;height:34px;line-height:34px;font-size:29.2px;color:#84ccfa;white-space:nowrap;letter-spacing:0.4px">00</div><div style="left:803.4px;top:1285px;width:20px;text-align:center;height:34px;line-height:34px;font-size:28.4px;color:#84ccfa">:</div><div style="left:822.6px;top:1285.2px;height:34px;line-height:34px;font-size:29.2px;color:#84ccfa;white-space:nowrap;letter-spacing:0.4px">24</div><div style="left:659.6px;top:1316.5px;width:60px;height:16px;line-height:16px;font-size:12.2px;font-weight:bold;color:#84ccfa;text-align:center">HR</div><div style="left:709.6px;top:1316.5px;width:60px;height:16px;line-height:16px;font-size:12.2px;font-weight:bold;color:#84ccfa;text-align:center">MIN</div><div style="left:759.7px;top:1316.5px;width:60px;height:16px;line-height:16px;font-size:12.2px;font-weight:bold;color:#84ccfa;text-align:center">SEC</div><div style="left:809.8px;top:1316.5px;width:60px;height:16px;line-height:16px;font-size:12.2px;font-weight:bold;color:#84ccfa;text-align:center">FR</div><div style="left:1628.3px;top:1286.5px;width:137.4px;height:44.2px;border-radius:5px;border:1.5px solid #6e6e6e;background:#343434"></div><div style="left:1628.3px;top:1292px;width:137.4px;height:32px;line-height:32px;font-size:25px;color:#d2d2d2;text-align:center">Encode</div><div style="left:1786px;top:1286.5px;width:115.2px;height:44.2px;border-radius:5px;border:1.5px solid #6e6e6e;background:#343434"></div><div style="left:1786px;top:1292px;width:115.2px;height:32px;line-height:32px;font-size:25px;color:#d2d2d2;text-align:center">Close</div>
</body></html>
